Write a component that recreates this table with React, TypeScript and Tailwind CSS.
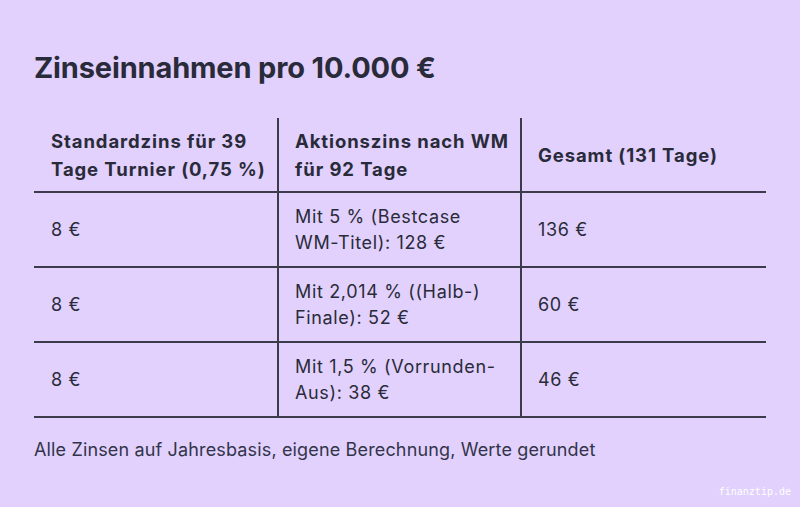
import React from 'react';

const rows = [
  { std: '8 €', action: ['Mit 5 % (Bestcase', 'WM-Titel): 128 €'], total: '136 €' },
  { std: '8 €', action: ['Mit 2,014 % ((Halb-)', 'Finale): 52 €'], total: '60 €' },
  { std: '8 €', action: ['Mit 1,5 % (Vorrunden-', 'Aus): 38 €'], total: '46 €' },
];

const head = 'h-[75px] flex items-center border-b-2 border-[#3b3b4b] text-[18.5px] font-bold leading-[28px] tracking-[0.9px]';
const cell = 'h-[75px] flex items-center border-b-2 border-[#3b3b4b] text-[18px] leading-[26px] tracking-[0.65px]';

export default function App() {
  return (
    <div
      className="w-[800px] h-[507px] bg-[#e1d1fc] text-[#2a2b3a] px-[34px] pt-[50px] relative overflow-hidden"
      style={{ fontFamily: 'Inter, "Noto Sans", sans-serif' }}
    >
      <h1 className="text-[29px] font-bold leading-[36px] tracking-[-0.15px]">Zinseinnahmen pro 10.000 €</h1>

      {/* Table */}
      <div className="mt-[32px] grid grid-cols-[245px_243px_244px]">
        <div className={`${head} pl-[17px] border-r-2`}>
          <span>Standardzins für 39<br />Tage Turnier (0,75 %)</span>
        </div>
        <div className={`${head} pl-[16px] border-r-2`}>
          <span>Aktionszins nach WM<br />für 92 Tage</span>
        </div>
        <div className={`${head} pl-[16px]`}>Gesamt (131 Tage)</div>

        {rows.map((r, i) => (
          <React.Fragment key={i}>
            <div className={`${cell} pl-[17px] border-r-2`}>{r.std}</div>
            <div className={`${cell} pl-[16px] border-r-2`}>
              <span>
                {r.action[0]}
                <br />
                {r.action[1]}
              </span>
            </div>
            <div className={`${cell} pl-[16px]`}>{r.total}</div>
          </React.Fragment>
        ))}
      </div>

      <p className="mt-[20px] text-[18px] leading-[24px] tracking-[0.15px] text-[#33344a]">
        Alle Zinsen auf Jahresbasis, eigene Berechnung, Werte gerundet
      </p>

      <div
        className="absolute right-[9px] bottom-[10px] text-[10px] text-white leading-none"
        style={{ fontFamily: '"DejaVu Sans Mono", monospace' }}
      >
        finanztip.de
      </div>
    </div>
  );
}
